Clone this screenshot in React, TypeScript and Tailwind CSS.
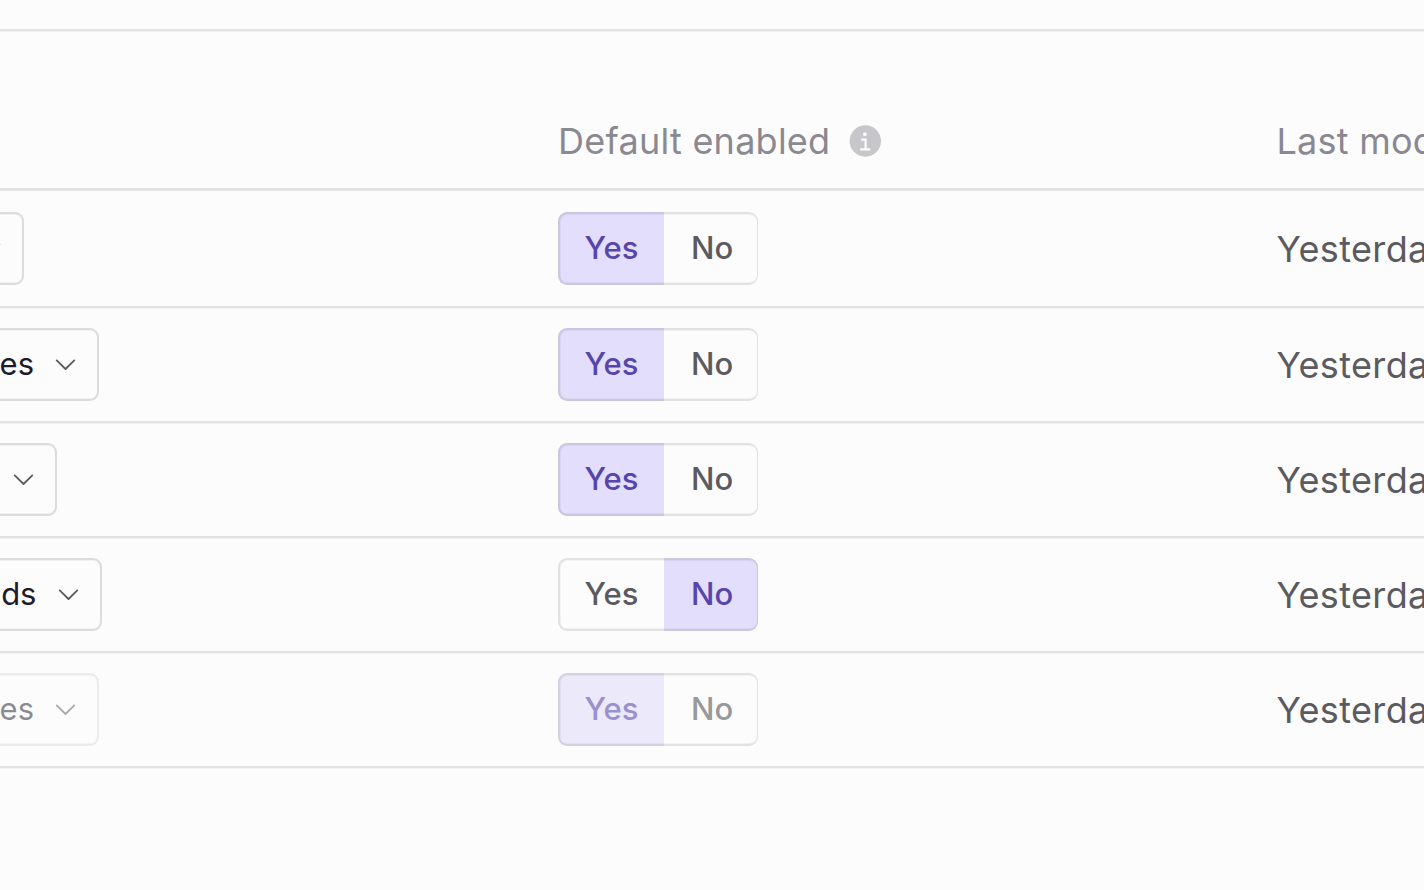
type Row = {
  label: string;
  trigger: string;
  enabled: boolean;
  disabled?: boolean;
  height: string;
};

const rows: Row[] = [
  { label: "", trigger: "w-[23.5px]", enabled: true, height: "h-[117px] pt-[21px]" },
  { label: "es", trigger: "w-[99px]", enabled: true, height: "h-[115px] pt-[20px]" },
  { label: "", trigger: "w-[57px]", enabled: true, height: "h-[115px] pt-[20px]" },
  { label: "ds", trigger: "w-[101.5px]", enabled: false, height: "h-[115px] pt-[20px]" },
  { label: "es", trigger: "w-[99px]", enabled: true, disabled: true, height: "h-[115px] pt-[20px]" },
];

function Chevron() {
  return (
    <svg className="h-3 w-[22px] shrink-0" viewBox="0 0 22 12" fill="none" stroke="#5b5a60" strokeWidth="1.8" strokeLinecap="round" strokeLinejoin="round">
      <path d="M1.7 1.4 10.5 10 19.3 1.4" />
    </svg>
  );
}

function InfoIcon() {
  return (
    <svg className="h-8 w-8" viewBox="0 0 32 32">
      <circle cx="16.3" cy="16" r="15.7" fill="#c7c6ca" />
      <circle cx="15.9" cy="9.2" r="1.9" fill="#fcfcfc" />
      <path d="M12.2 14.6H16.6V24M11.2 24.4H21.2" fill="none" stroke="#fcfcfc" strokeWidth="2.2" />
    </svg>
  );
}

function Toggle({ enabled, disabled }: { enabled: boolean; disabled?: boolean }) {
  const on = disabled ? "bg-[#ece9fa] text-[#9a8fcf]" : "bg-[#e2defb] text-[#5645ab]";
  const off = disabled ? "text-[#99989b]" : "text-[#5b5a60]";
  return (
    <div className="flex h-[73px] w-[200px] text-[31px] font-medium leading-[66px] tracking-[0.1px]">
      <button className={`w-[106px] rounded-l-[9px] border-y-2 border-l-2 border-black/10 pb-[2px] pl-[24.5px] text-left shadow-[inset_1px_1px_0_rgb(0_0_0/0.04),inset_0_-1px_0_rgb(0_0_0/0.04)] ${enabled ? on : off}`}>Yes</button>
      <button className={`w-[94px] rounded-r-[9px] border-y-2 border-r border-black/10 pb-[2px] pl-[27px] text-left shadow-[inset_0_1px_0_rgb(0_0_0/0.04),inset_0_-1px_0_rgb(0_0_0/0.04)] ${enabled ? off : on}`}>No</button>
    </div>
  );
}

export default function App() {
  return (
    <div className="h-[890px] w-[1424px] overflow-hidden bg-[#fcfcfc] font-['Inter',sans-serif]">
      <div className="h-[31px] border-b-2 border-[#e2e2e3] shadow-[0_1px_0_#f2f2f2]" />
      <div className="grid h-[159px] grid-cols-[558px_718.5px_147.5px] border-b-2 border-[#e2e2e3] pt-[88px] text-[36px] leading-[44px] tracking-[0.25px] text-[#8a8891] shadow-[0_1px_0_#e6e6e7]">
        <span />
        <div className="flex h-[44px] items-center gap-[19px]">
          <span>Default enabled</span>
          <InfoIcon />
        </div>
        <span className="whitespace-nowrap">Last modified</span>
      </div>
      {rows.map((row, i) => (
        <div
          key={i}
          className={`grid grid-cols-[558px_718.5px_147.5px] border-b-2 border-[#e2e2e3] shadow-[0_1px_0_#f2f2f2] ${i === 0 ? "mt-px" : ""} ${row.height}`}
        >
          <div>
            <button
              className={`flex h-[73px] items-center justify-end gap-[21px] overflow-hidden rounded-r-[9px] border-y-2 border-r-2 border-[#dcdcdd] pr-[20px] text-[31px] text-[#1c1a2b] shadow-[inset_0_1px_0_#f1f1f1,inset_0_-1px_0_#f1f1f1] ${row.trigger} ${row.disabled ? "opacity-50" : ""}`}
            >
              {row.label && <span>{row.label}</span>}
              <Chevron />
            </button>
          </div>
          <Toggle enabled={row.enabled} disabled={row.disabled} />
          <span className="whitespace-nowrap text-[36px] leading-[74px] tracking-[0.35px] text-[#5b5a60]">Yesterday</span>
        </div>
      ))}
    </div>
  );
}
